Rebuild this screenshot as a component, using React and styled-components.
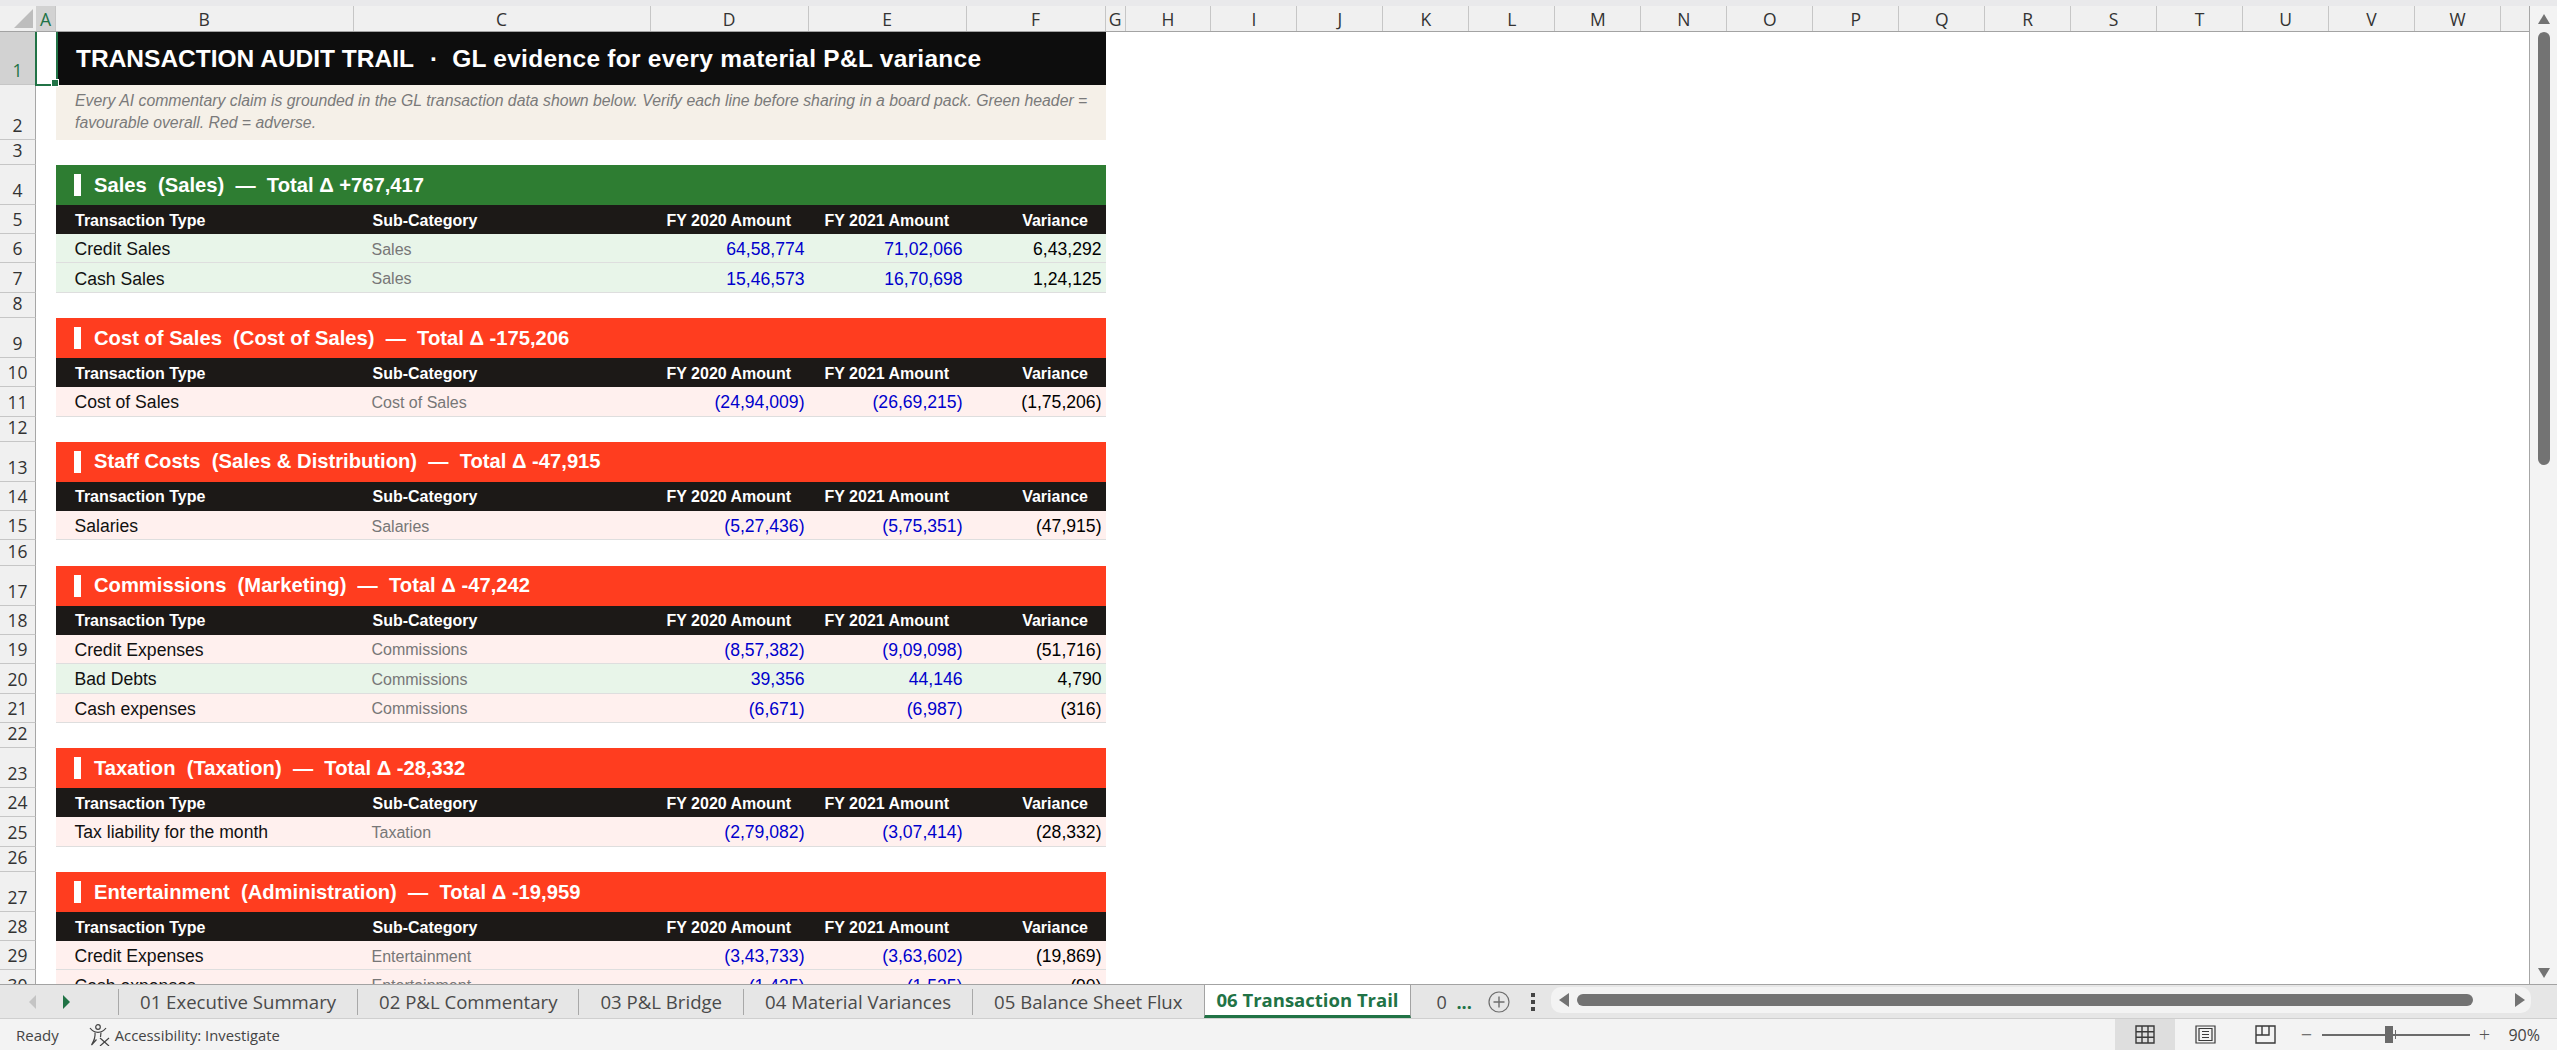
import React from "react";
import styled, { createGlobalStyle } from "styled-components";

const COLUMNS = "36px 20px 297.5px 297px 158px 158px 139px 20px 1fr";
const EXCEL_UI = `"Open Sans", "Noto Sans", sans-serif`;

const sections = [
  {
    title: "Sales  (Sales)  —  Total Δ +767,417",
    good: true,
    rows: [
      ["Credit Sales", "Sales", "64,58,774", "71,02,066", "6,43,292", true],
      ["Cash Sales", "Sales", "15,46,573", "16,70,698", "1,24,125", true],
    ],
  },
  {
    title: "Cost of Sales  (Cost of Sales)  —  Total Δ -175,206",
    rows: [["Cost of Sales", "Cost of Sales", "(24,94,009)", "(26,69,215)", "(1,75,206)"]],
  },
  {
    title: "Staff Costs  (Sales & Distribution)  —  Total Δ -47,915",
    rows: [["Salaries", "Salaries", "(5,27,436)", "(5,75,351)", "(47,915)"]],
  },
  {
    title: "Commissions  (Marketing)  —  Total Δ -47,242",
    rows: [
      ["Credit Expenses", "Commissions", "(8,57,382)", "(9,09,098)", "(51,716)"],
      ["Bad Debts", "Commissions", "39,356", "44,146", "4,790", true],
      ["Cash expenses", "Commissions", "(6,671)", "(6,987)", "(316)"],
    ],
  },
  {
    title: "Taxation  (Taxation)  —  Total Δ -28,332",
    rows: [["Tax liability for the month", "Taxation", "(2,79,082)", "(3,07,414)", "(28,332)"]],
  },
  {
    title: "Entertainment  (Administration)  —  Total Δ -19,959",
    rows: [
      ["Credit Expenses", "Entertainment", "(3,43,733)", "(3,63,602)", "(19,869)"],
      ["Cash expenses", "Entertainment", "(1,435)", "(1,525)", "(90)"],
    ],
  },
];

const columnLetters = "HIJKLMNOPQRSTUVW".split("");
const tabs = ["01 Executive Summary", "02 P&L Commentary", "03 P&L Bridge", "04 Material Variances", "05 Balance Sheet Flux"];

const App = () => {
  let rowNo = 3;
  return (
    <>
      <GlobalStyle />
      <Window>
        <TopStrip />
        <Workspace>
          <SheetColumn>
            <ColumnHeader>
              <Corner>
                <svg width="19" height="19" viewBox="0 0 19 19">
                  <path d="M19 0V19H0Z" fill="#bdbdbd" />
                </svg>
              </Corner>
              <ColLabel $active>A</ColLabel>
              <ColLabel>B</ColLabel>
              <ColLabel>C</ColLabel>
              <ColLabel>D</ColLabel>
              <ColLabel>E</ColLabel>
              <ColLabel>F</ColLabel>
              <ColLabel>G</ColLabel>
              <RestLabels>
                {columnLetters.map((c) => (
                  <ColLabel key={c}>{c}</ColLabel>
                ))}
              </RestLabels>
            </ColumnHeader>
            <Grid>
              <Row $h={53}>
                <RowNum $active>1</RowNum>
                <SelectedCell />
                <TitleCell>
                  TRANSACTION AUDIT TRAIL
                  <TitleDot>·</TitleDot>
                  <TitleRest>GL evidence for every material P&amp;L variance</TitleRest>
                </TitleCell>
              </Row>
              <Row $h={55}>
                <RowNum>2</RowNum>
                <span />
                <NoteCell>
                  Every AI commentary claim is grounded in the GL transaction data shown below. Verify each line before
                  sharing in a board pack. Green header = favourable overall. Red = adverse.
                </NoteCell>
              </Row>
              <Row $h={25}>
                <RowNum>3</RowNum>
              </Row>
              {sections.map((s) => (
                <React.Fragment key={s.title}>
                  <Row $h={40}>
                    <RowNum>{++rowNo}</RowNum>
                    <span />
                    <SectionBar $good={s.good}>
                      <Marker />
                      {s.title}
                    </SectionBar>
                  </Row>
                  <Row $h={29}>
                    <RowNum>{++rowNo}</RowNum>
                    <span />
                    <HeadCell>Transaction Type</HeadCell>
                    <HeadCell>Sub-Category</HeadCell>
                    <HeadCell $right>FY 2020 Amount</HeadCell>
                    <HeadCell $right>FY 2021 Amount</HeadCell>
                    <HeadCell $right>Variance</HeadCell>
                  </Row>
                  {s.rows.map((r) => (
                    <Row $h={29.4} key={r[0]}>
                      <RowNum>{++rowNo}</RowNum>
                      <span />
                      <DataCell $good={r[5]}>{r[0]}</DataCell>
                      <SubCell $good={r[5]}>{r[1]}</SubCell>
                      <NumCell $good={r[5]} $blue>{r[2]}</NumCell>
                      <NumCell $good={r[5]} $blue>{r[3]}</NumCell>
                      <NumCell $good={r[5]}>{r[4]}</NumCell>
                    </Row>
                  ))}
                  <Row $h={25.4}>
                    <RowNum>{++rowNo}</RowNum>
                  </Row>
                </React.Fragment>
              ))}
            </Grid>
          </SheetColumn>
          <VScroll>
            <ArrowUp />
            <VThumb />
            <ArrowDown />
          </VScroll>
        </Workspace>
        <TabBar>
          <TabNav>
            <svg width="9" height="14" viewBox="0 0 9 14">
              <path d="M8 0V14L1 7Z" fill="#c4c4c4" />
            </svg>
            <svg width="9" height="14" viewBox="0 0 9 14">
              <path d="M1 0V14L8 7Z" fill="#217346" />
            </svg>
          </TabNav>
          {tabs.map((t) => (
            <Tab key={t}>{t}</Tab>
          ))}
          <ActiveTab>06 Transaction Trail</ActiveTab>
          <ClippedTab>0</ClippedTab>
          <More>...</More>
          <AddSheet>
            <svg width="22" height="22" viewBox="0 0 22 22" fill="none" stroke="#6e6e6e">
              <circle cx="11" cy="11" r="10" strokeWidth="1.2" />
              <path d="M11 5.5V16.5M5.5 11H16.5" strokeWidth="1.4" />
            </svg>
          </AddSheet>
          <Dots>
            <i />
            <i />
            <i />
          </Dots>
          <HScroll>
            <ArrowLeft />
            <HThumb />
            <ArrowRight />
          </HScroll>
        </TabBar>
        <StatusBar>
          <Ready>Ready</Ready>
          <A11y>
            <svg width="21" height="22" viewBox="0 0 21 22" fill="none" stroke="#444" strokeWidth="1.2">
              <circle cx="9" cy="3" r="2.3" />
              <path d="M1 4C4 8 6 8.3 9 8.3S14 8 17 4" />
              <path d="M6 8.5C6.5 12 5.5 16 2.5 21L7.5 15.5M12 8.5 11.5 13" />
              <path d="M11 14 20 22M20 14 11 22" />
            </svg>
            Accessibility: Investigate
          </A11y>
          <StatusRight>
            <ViewButton $active>
              <svg width="20" height="19" viewBox="0 0 20 19" fill="none" stroke="#3a3a3a" strokeWidth="1.4">
                <path d="M1 1H19V18H1ZM7 1V18M13 1V18M1 6.7H19M1 12.3H19" />
              </svg>
            </ViewButton>
            <ViewButton>
              <svg width="21" height="19" viewBox="0 0 21 19" fill="none" stroke="#3a3a3a" strokeWidth="1.2">
                <path d="M1 1H20V18H1ZM4 3.5H17V15.5H4ZM7 6.5H14M7 9.5H14M7 12.5H14" />
              </svg>
            </ViewButton>
            <ViewButton>
              <svg width="21" height="19" viewBox="0 0 21 19" fill="none" stroke="#3a3a3a" strokeWidth="1.4">
                <path d="M1 1H20V18H1ZM7 1V10H14V1M1 10H7" />
              </svg>
            </ViewButton>
            <ZoomSign>−</ZoomSign>
            <Slider>
              <Knob />
              <Tick />
            </Slider>
            <ZoomSign>+</ZoomSign>
            <ZoomValue>90%</ZoomValue>
          </StatusRight>
        </StatusBar>
      </Window>
    </>
  );
};

export default App;

const GlobalStyle = createGlobalStyle`
  html, body { margin: 0; height: 100%; overflow: hidden; background: #fff; }
  #root { height: 100%; }
`;

const Window = styled.div`
  width: 2557px;
  height: 1050px;
  display: flex;
  flex-direction: column;
  background: #f3f3f3;
  font-family: ${EXCEL_UI};
`;

const TopStrip = styled.div`
  height: 6px;
  flex: none;
  background: #e9e9eb;
`;

const Workspace = styled.div`
  height: 978px;
  flex: none;
  display: flex;
`;

const SheetColumn = styled.div`
  width: 2530px;
  display: flex;
  flex-direction: column;
  border-right: 1px solid #a6a6a6;
  box-sizing: border-box;
  background: #fff;
`;

const ColumnHeader = styled.div`
  height: 26px;
  flex: none;
  display: grid;
  grid-template-columns: ${COLUMNS};
  background: #f0f0f0;
  border-bottom: 1.5px solid #a3a3a3;
  box-sizing: border-box;
  overflow: hidden;
`;

const Corner = styled.div`
  display: flex;
  justify-content: flex-end;
  align-items: flex-end;
  padding: 0 3px 3px 0;
`;

const ColLabel = styled.div`
  display: flex;
  align-items: center;
  justify-content: center;
  font-size: 17.5px;
  color: ${(p) => (p.$active ? "#217346" : "#333")};
  background: ${(p) => (p.$active ? "#d2d2d2" : "transparent")};
  border-right: 1px solid #c6c6c6;
  box-sizing: border-box;
`;

const RestLabels = styled.div`
  display: grid;
  grid-template-columns: repeat(16, 85.97px) 1fr;
`;

const Grid = styled.div`
  flex: 1;
  overflow: hidden;
  min-height: 0;
  font-family: "Liberation Sans", Arial, sans-serif;
`;

const Row = styled.div`
  height: ${(p) => p.$h}px;
  display: grid;
  grid-template-columns: ${COLUMNS};
  grid-template-rows: 100%;
`;

const RowNum = styled.div`
  display: flex;
  align-items: flex-end;
  justify-content: center;
  padding-bottom: 1px;
  box-sizing: border-box;
  font-family: ${EXCEL_UI};
  font-size: 17.5px;
  line-height: 25px;
  color: ${(p) => (p.$active ? "#217346" : "#333")};
  background: ${(p) => (p.$active ? "#d2d2d2" : "#f0f0f0")};
  border-right: 1px solid #a6a6a6;
  border-bottom: 1px solid #c6c6c6;
`;

const SelectedCell = styled.div`
  position: relative;
  z-index: 2;
  margin: -2px -2px -1px -1px;
  border: 2px solid #217346;
  background: #fff;

  &::after {
    content: "";
    position: absolute;
    right: -3px;
    bottom: -3px;
    width: 6px;
    height: 6px;
    background: #217346;
    border: 1px solid #fff;
  }
`;

const TitleCell = styled.div`
  grid-column: 3 / 8;
  display: flex;
  align-items: center;
  padding-left: 20px;
  white-space: pre;
  background: #0d0d0d;
  color: #fff;
  font-size: 24.5px;
  font-weight: 700;
`;

const TitleDot = styled.span`
  margin: 0 14px 0 16px;
`;

const TitleRest = styled.span`
  letter-spacing: 0.26px;
`;

const NoteCell = styled.div`
  grid-column: 3 / 8;
  padding: 5px 10px 0 19px;
  background: #f5f0e8;
  color: #7a7a7a;
  font-size: 15.8px;
  font-style: italic;
  line-height: 22px;
`;

const SectionBar = styled.div`
  grid-column: 3 / 8;
  display: flex;
  align-items: center;
  padding-left: 18px;
  white-space: pre;
  color: #fff;
  font-size: 20.2px;
  font-weight: 700;
  background: ${(p) => (p.$good ? "#2e7d32" : "#ff3d1f")};
`;

const Marker = styled.span`
  width: 7px;
  height: 22px;
  margin-right: 13px;
  background: #fff;
`;

const HeadCell = styled.div`
  display: flex;
  align-items: center;
  justify-content: ${(p) => (p.$right ? "flex-end" : "flex-start")};
  padding: ${(p) => (p.$right ? "2px 17.5px 0 0" : "2px 0 0 19px")};
  background: #1c1917;
  color: #fff;
  font-size: 16px;
  font-weight: 700;
  white-space: nowrap;
`;

const DataCell = styled.div`
  display: flex;
  align-items: center;
  padding: 3px 0 0 18.5px;
  background: ${(p) => (p.$good ? "#e8f5e9" : "#fff0ee")};
  border-bottom: 1px solid #dedede;
  color: #111;
  font-size: 17.6px;
  white-space: nowrap;
  box-sizing: border-box;
`;

const SubCell = styled(DataCell)`
  padding: 3px 0 0 18px;
  color: #777;
  font-size: 16px;
`;

const NumCell = styled(DataCell)`
  justify-content: flex-end;
  padding: 3px 4px 0 0;
  color: ${(p) => (p.$blue ? "#0000cc" : "#000")};
`;

const VScroll = styled.div`
  flex: 1;
  display: flex;
  flex-direction: column;
  align-items: center;
  background: #f3f3f3;
`;

const ArrowUp = styled.div`
  margin-top: 8px;
  border: solid transparent;
  border-width: 0 6px 10px;
  border-bottom-color: #737373;
`;

const VThumb = styled.div`
  margin-top: 8px;
  width: 12px;
  height: 433px;
  border-radius: 6px;
  background: #737373;
`;

const ArrowDown = styled.div`
  margin-top: auto;
  margin-bottom: 6px;
  border: solid transparent;
  border-width: 10px 6px 0;
  border-top-color: #737373;
`;

const TabBar = styled.div`
  height: 35px;
  flex: none;
  display: flex;
  align-items: center;
  background: #e6e6e6;
  border-top: 1px solid #a3a3a3;
  border-bottom: 1px solid #cfcfcf;
  box-sizing: border-box;
  position: relative;
`;

const TabNav = styled.div`
  width: 118px;
  box-sizing: border-box;
  flex: none;
  display: flex;
  align-items: center;
  gap: 25px;
  padding-left: 28px;
`;

const Tab = styled.div`
  height: 26px;
  display: flex;
  align-items: center;
  padding: 0 21px;
  border-left: 1px solid #a8a8a8;
  font-size: 18.6px;
  color: #4a4a4a;
  white-space: nowrap;
`;

const ActiveTab = styled.div`
  height: 100%;
  display: flex;
  align-items: center;
  padding: 0 12px;
  margin-top: -1px;
  background: #fff;
  border-left: 1px solid #a3a3a3;
  border-right: 1px solid #a3a3a3;
  border-bottom: 3px solid #217346;
  box-sizing: border-box;
  font-size: 18.5px;
  font-weight: 700;
  color: #217346;
  white-space: nowrap;
`;

const ClippedTab = styled.div`
  margin-left: 25px;
  width: 13px;
  overflow: hidden;
  font-size: 18px;
  color: #4a4a4a;
`;

const More = styled.div`
  margin-left: 7px;
  font-size: 18px;
  font-weight: 700;
  color: #217346;
`;

const AddSheet = styled.div`
  margin-left: 16.5px;
  display: flex;
`;

const Dots = styled.div`
  margin-left: 21px;
  display: flex;
  flex-direction: column;
  gap: 3px;

  i {
    width: 4px;
    height: 4px;
    background: #444;
    display: block;
  }
`;

const HScroll = styled.div`
  position: absolute;
  left: 1551px;
  width: 980px;
  top: 2px;
  height: 26px;
  display: flex;
  align-items: center;
  border-radius: 10px;
  background: #f3f3f3;
`;

const ArrowLeft = styled.div`
  margin-left: 8px;
  border: solid transparent;
  border-width: 7px 10px 7px 0;
  border-right-color: #737373;
`;

const HThumb = styled.div`
  margin-left: 8px;
  width: 896px;
  height: 12px;
  border-radius: 6px;
  background: #737373;
`;

const ArrowRight = styled.div`
  margin-left: auto;
  margin-right: 6px;
  border: solid transparent;
  border-width: 7px 0 7px 10px;
  border-left-color: #737373;
`;

const StatusBar = styled.div`
  flex: 1;
  display: flex;
  align-items: center;
  background: #f3f3f3;
  color: #444;
  font-size: 15px;
`;

const Ready = styled.div`
  margin-left: 16px;
`;

const A11y = styled.div`
  margin-left: 30px;
  display: flex;
  align-items: center;
  gap: 5px;
  font-size: 14.8px;
`;

const StatusRight = styled.div`
  margin-left: auto;
  height: 100%;
  display: flex;
  align-items: center;
`;

const ViewButton = styled.div`
  width: 60px;
  height: 100%;
  display: flex;
  align-items: center;
  justify-content: center;
  background: ${(p) => (p.$active ? "#dedede" : "transparent")};
`;

const ZoomSign = styled.div`
  width: 14px;
  margin-left: 4px;
  text-align: center;
  font-size: 20px;
  font-weight: 300;
  color: #555;
`;

const Slider = styled.div`
  position: relative;
  width: 148px;
  height: 2px;
  margin: 0 3px 0 9px;
  background: #6a6a6a;
`;

const Knob = styled.div`
  position: absolute;
  left: 63px;
  top: -8px;
  width: 8px;
  height: 17px;
  background: #6a6a6a;
`;

const Tick = styled.div`
  position: absolute;
  left: 73px;
  top: -4px;
  width: 1px;
  height: 9px;
  background: #6a6a6a;
`;

const ZoomValue = styled.div`
  margin: 0 17px 0 17px;
  font-size: 16px;
  color: #444;
`;
